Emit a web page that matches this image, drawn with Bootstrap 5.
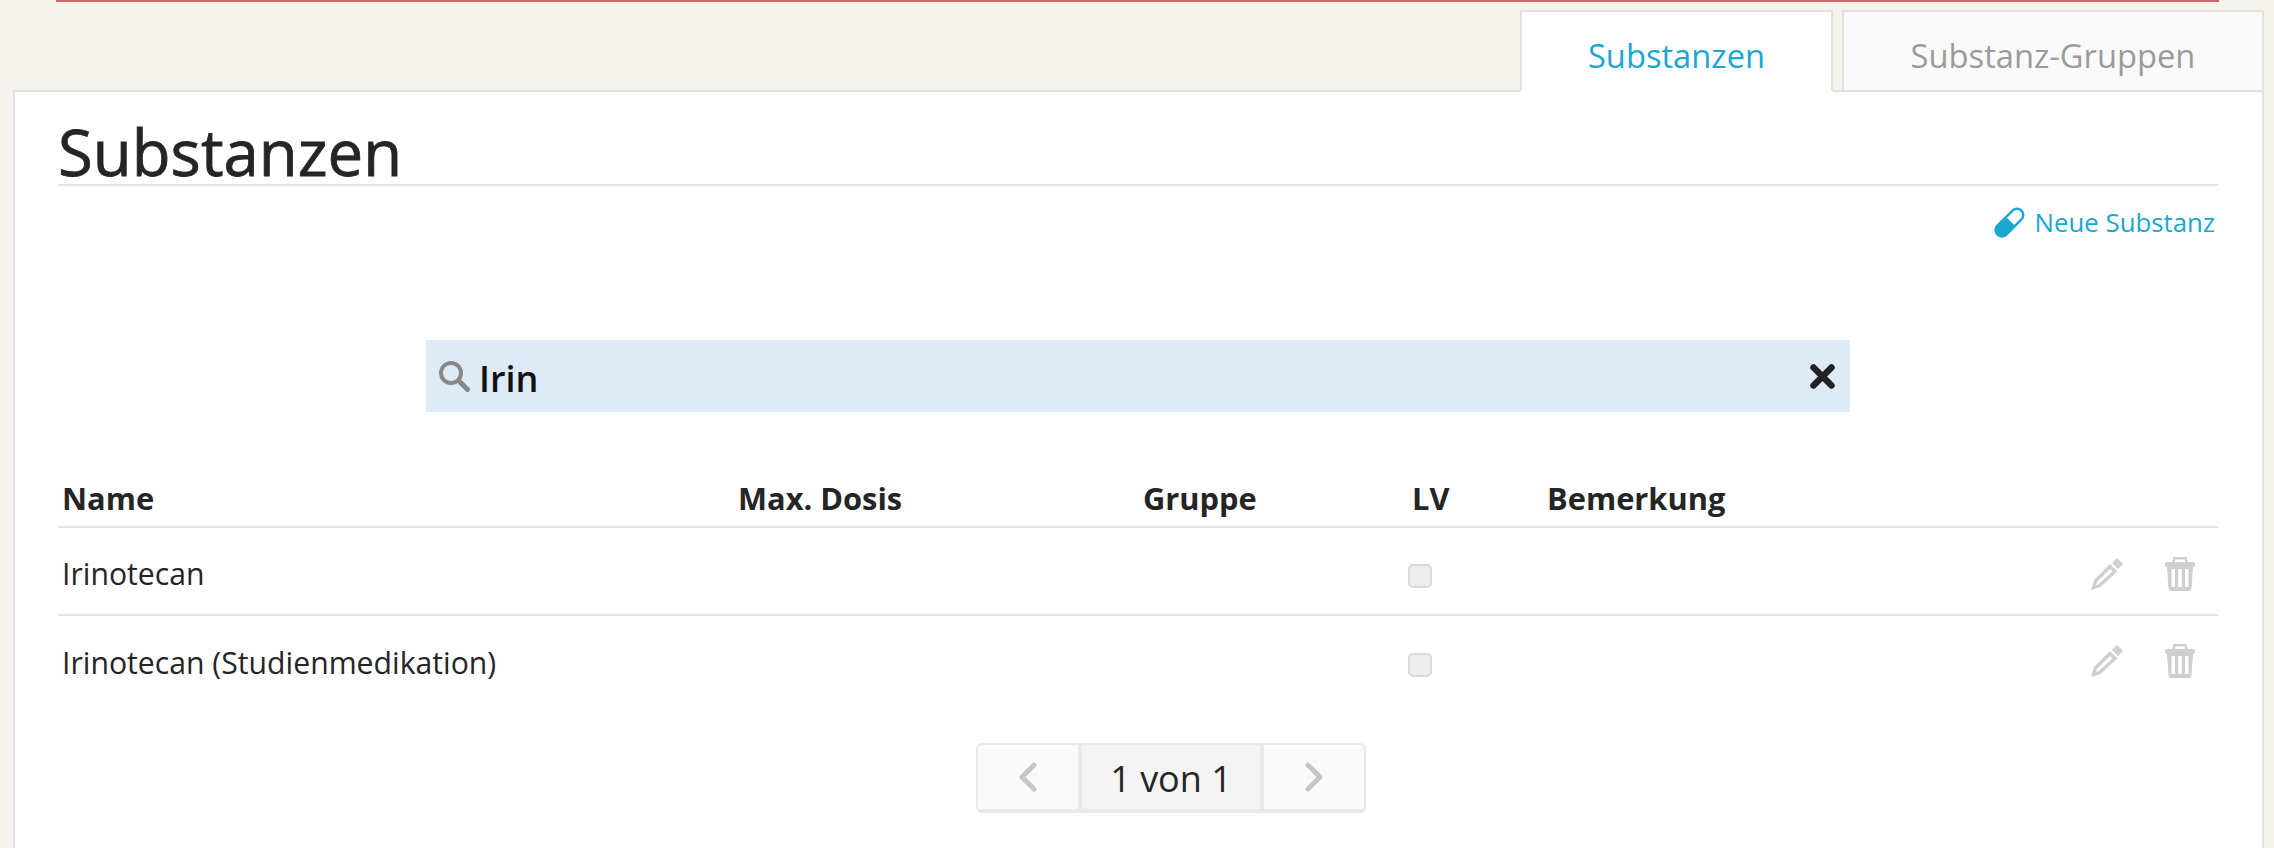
<!DOCTYPE html>
<html lang="de">
<head>
    <meta charset="UTF-8">
    <title>Substanzen</title>
    <link href="https://cdn.jsdelivr.net/npm/bootstrap@5.3.3/dist/css/bootstrap.min.css" rel="stylesheet">
    <style>
        html, body { height: 848px; overflow: hidden; }
        body { background: #f6f3ec; font-family: "Open Sans", sans-serif; color: #252525; font-size: 30.2px; }
        .red-line { height: 2px; width: 2163px; margin-left: 56px; background: #c96a68; }
        .reiter { margin: 8px 10px 0 13px; gap: 6px; height: 82px; position: relative; z-index: 1; }
        .reiter .nav-link { font-size: 32.7px; height: 82px; padding: 10px 0 0; display: flex; align-items: center; justify-content: center; border: 2px solid #e2e2e2; border-radius: 0; color: #9b9b9b; background: #fafafa; }
        .reiter .nav-link.active { width: 313px; color: #1ba7d1; background: #fff; border-bottom-color: #fff; }
        .reiter .reiter-zwei { width: 422px; margin-left: 3px; }
        .tafel { margin: -2px 10px 0 13px; background: #fff; border: 2px solid #e2e2e2; border-bottom: 0; padding: 0 44px 0 43px; height: 760px; }
        .tafel h1 { font-size: 63.5px; font-weight: 400; -webkit-text-stroke: 0.8px #252525; line-height: 69px; height: 94px; padding-top: 25px; margin: 0; border-bottom: 2px solid #e2e2e2; color: #252525; }
        .neu-link { color: #1ba7d1; font-size: 25.8px; text-decoration: none; gap: 10px; margin: 19px 3px 0 0; height: 34px; }
        .suche { width: 1424px; height: 72px; margin: 101px auto 0; background: #deeaf6; padding: 0 15px 0 13px; gap: 9px; }
        .suche-text { font-size: 36px; font-weight: 600; color: #111; line-height: 1; padding-top: 5px; }
        .suche-zu { margin-left: auto; }
        .stoffe { margin: 60px 0 0; table-layout: fixed; width: 100%; --bs-table-color: #252525; }
        .stoffe th { font-size: 30.8px; font-weight: 700; padding: 0 4px 2px; height: 55px; border-bottom: 2px solid #e2e2e2; vertical-align: middle; }
        .stoffe td { height: 88px; padding: 6px 4px 0; vertical-align: middle; border-bottom: 2px solid #e2e2e2; }
        .stoffe tr:last-child td { border-bottom: 0; }
        .stoffe tr:last-child .aktionen { margin-top: -4px; }
        .sp-name { width: 676px; }
        .sp-dosis { width: 405px; }
        .sp-gruppe { width: 269px; }
        .sp-lv { width: 135px; }
        .sp-aktion { width: 200px; }
        .stoffe .form-check-input { width: 24px; height: 24px; margin: 4px 0 0 -4px; float: none; display: block; background-color: #eee; border: 2px solid #d9d9d9; border-radius: 5px; opacity: 1; }
        .aktionen { gap: 42px; padding-right: 19px; }
        .blaettern { width: 390px; height: 70px; margin: 40px 0 0 918px; border: 2px solid #e9e9e9; border-bottom-width: 4px; border-radius: 6px; background: #fafafa; }
        .blaettern-pfeil { width: 100px; }
        .blaettern-mitte { width: 186px; background: #f4f4f4; border-left: 4px solid #e9e9e9; border-right: 4px solid #e9e9e9; font-size: 36px; padding-top: 3px; }
    </style>
</head>
<body>
    <div class="red-line"></div>

    <ul class="nav reiter justify-content-end">
        <li class="nav-item"><a class="nav-link active" href="#">Substanzen</a></li>
        <li class="nav-item"><a class="nav-link reiter-zwei" href="#">Substanz-Gruppen</a></li>
    </ul>

    <div class="tafel">
        <h1>Substanzen</h1>

        <div class="d-flex justify-content-end">
            <a class="neu-link d-flex align-items-center" href="#">
                <svg width="31" height="31" viewBox="0 0 31 31">
                    <g transform="rotate(-45 15.5 15.5)">
                        <rect x="-1.4" y="9.2" width="33.8" height="12.6" rx="6.3" fill="none" stroke="#1ba7d1" stroke-width="2.4"/>
                        <path d="M17 8 H4.9 A7.5 7.5 0 0 0 4.9 23 H17 Z" fill="#1ba7d1"/>
                    </g>
                </svg>
                Neue Substanz
            </a>
        </div>

        <div class="suche d-flex align-items-center">
            <svg width="31" height="31" viewBox="0 0 31 31">
                <circle cx="12" cy="12" r="10" fill="none" stroke="#888" stroke-width="4"/>
                <path d="M19.5 19.5 L28.5 28.5" stroke="#888" stroke-width="5" stroke-linecap="round"/>
            </svg>
            <span class="suche-text">Irin</span>
            <svg class="suche-zu" width="25" height="25" viewBox="0 0 25 25">
                <path d="M3.5 3.5 L21.5 21.5 M21.5 3.5 L3.5 21.5" stroke="#222" stroke-width="6.5" stroke-linecap="round"/>
            </svg>
        </div>

        <table class="table stoffe">
            <thead>
                <tr>
                    <th class="sp-name">Name</th>
                    <th class="sp-dosis">Max. Dosis</th>
                    <th class="sp-gruppe">Gruppe</th>
                    <th class="sp-lv">LV</th>
                    <th>Bemerkung</th>
                    <th class="sp-aktion"></th>
                </tr>
            </thead>
            <tbody>
                <tr>
                    <td>Irinotecan</td>
                    <td></td>
                    <td></td>
                    <td><input class="form-check-input" type="checkbox" disabled></td>
                    <td></td>
                    <td>
                        <div class="aktionen d-flex justify-content-end align-items-center">
                            <svg width="32" height="32" viewBox="0 0 32 32">
                                <path d="M21 5 L26 0 L32 6 L27 11 Z" fill="#cfcfcf"/>
                                <path d="M19 8.5 L24 13.5 L8.5 27.5 L2.5 29.5 L4.5 23 Z" fill="none" stroke="#cfcfcf" stroke-width="3.4"/>
                            </svg>
                            <svg width="30" height="34" viewBox="0 0 30 34">
                                <path d="M8.5 5 L9.5 1.2 L20.5 1.2 L21.5 5" fill="none" stroke="#cfcfcf" stroke-width="2.4"/>
                                <rect x="0" y="5" width="30" height="5" rx="2" fill="#cfcfcf"/>
                                <path fill-rule="evenodd" d="M2 9 H28 L26.5 31 Q26.3 34 23.5 34 H6.5 Q3.7 34 3.5 31 Z M6.5 12 V30 H10 V12 Z M13.2 12 V30 H16.8 V12 Z M20 12 V30 H23.5 V12 Z" fill="#cfcfcf"/>
                            </svg>
                        </div>
                    </td>
                </tr>
                <tr>
                    <td>Irinotecan (Studienmedikation)</td>
                    <td></td>
                    <td></td>
                    <td><input class="form-check-input" type="checkbox" disabled></td>
                    <td></td>
                    <td>
                        <div class="aktionen d-flex justify-content-end align-items-center">
                            <svg width="32" height="32" viewBox="0 0 32 32">
                                <path d="M21 5 L26 0 L32 6 L27 11 Z" fill="#cfcfcf"/>
                                <path d="M19 8.5 L24 13.5 L8.5 27.5 L2.5 29.5 L4.5 23 Z" fill="none" stroke="#cfcfcf" stroke-width="3.4"/>
                            </svg>
                            <svg width="30" height="34" viewBox="0 0 30 34">
                                <path d="M8.5 5 L9.5 1.2 L20.5 1.2 L21.5 5" fill="none" stroke="#cfcfcf" stroke-width="2.4"/>
                                <rect x="0" y="5" width="30" height="5" rx="2" fill="#cfcfcf"/>
                                <path fill-rule="evenodd" d="M2 9 H28 L26.5 31 Q26.3 34 23.5 34 H6.5 Q3.7 34 3.5 31 Z M6.5 12 V30 H10 V12 Z M13.2 12 V30 H16.8 V12 Z M20 12 V30 H23.5 V12 Z" fill="#cfcfcf"/>
                            </svg>
                        </div>
                    </td>
                </tr>
            </tbody>
        </table>

        <div class="blaettern d-flex">
            <div class="blaettern-pfeil d-flex align-items-center justify-content-center">
                <svg width="18" height="30" viewBox="0 0 18 30"><path d="M15 3 L3 15 L15 27" fill="none" stroke="#c6c6c6" stroke-width="5" stroke-linecap="round" stroke-linejoin="round"/></svg>
            </div>
            <div class="blaettern-mitte d-flex align-items-center justify-content-center">1 von 1</div>
            <div class="blaettern-pfeil d-flex align-items-center justify-content-center">
                <svg width="18" height="30" viewBox="0 0 18 30"><path d="M3 3 L15 15 L3 27" fill="none" stroke="#c6c6c6" stroke-width="5" stroke-linecap="round" stroke-linejoin="round"/></svg>
            </div>
        </div>
    </div>

    <script src="https://cdn.jsdelivr.net/npm/bootstrap@5.3.3/dist/js/bootstrap.bundle.min.js"></script>
</body>
</html>
